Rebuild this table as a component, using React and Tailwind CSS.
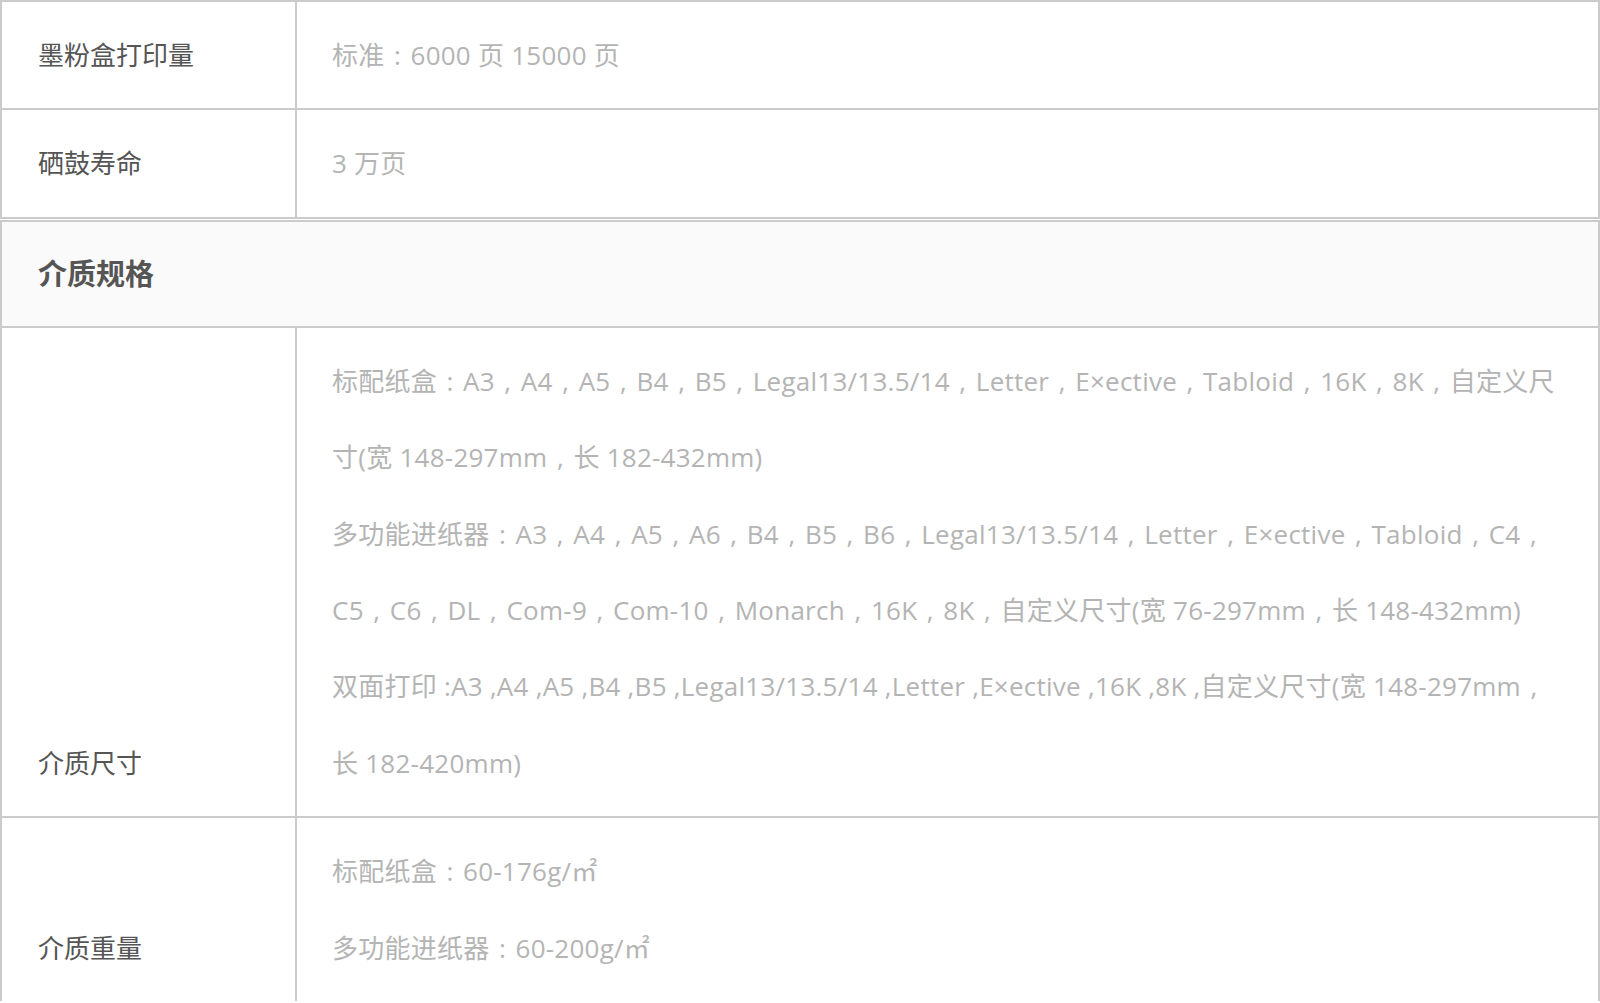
import React from "react";

const font = {
  fontFamily: '"Open Sans", "Noto Sans CJK SC", sans-serif',
};

// fullwidth comma / colon drawn centred in a 1em box, as in the source page
function T({ children }) {
  const parts = children.split(/([，：])/);
  return parts.map((p, i) =>
    p === "，" || p === "：" ? (
      <span key={i} className="inline-block w-[1em] text-center">
        {p === "，" ? "," : ":"}
      </span>
    ) : (
      p
    )
  );
}

function Row({ label, children, last }) {
  return (
    <div
      className={
        "grid grid-cols-[293px_1fr] " + (last ? "" : "border-b-2 border-[#cbcbcb]")
      }
    >
      <div className="flex items-end py-[15px] pl-[36px] text-[26px] leading-[76.4px] text-[#555]">
        {label}
      </div>
      <div className="border-l-2 border-[#cbcbcb] py-[15px] pl-[35px] pr-[10px] text-[26px] leading-[76.4px] tracking-[0.25px] whitespace-nowrap text-[#b4b4b4]">
        {children}
      </div>
    </div>
  );
}

export default function App() {
  return (
    <div className="w-[1600px] bg-white" style={font}>
      <div className="border-x-2 border-t-2 border-[#cbcbcb]">
        <Row label="墨粉盒打印量">
          <T>标准：6000 页 15000 页</T>
        </Row>
        <Row label="硒鼓寿命">3 万页</Row>
      </div>

      <div className="mt-[1px] border-x-2 border-t-2 border-[#cbcbcb]">
        <div className="border-b-2 border-[#cbcbcb] bg-[#fafafa] py-[14px] pl-[36px] text-[29px] font-bold leading-[76px] text-[#555]">
          介质规格
        </div>
        <Row label="介质尺寸">
          <p>
            <T>标配纸盒：A3，A4，A5，B4，B5，Legal13/13.5/14，Letter，E×ective，Tabloid，16K，8K，自定义尺</T>
            <br />
            <T>寸(宽 148-297mm，长 182-432mm)</T>
          </p>
          <p>
            <T>多功能进纸器：A3，A4，A5，A6，B4，B5，B6，Legal13/13.5/14，Letter，E×ective，Tabloid，C4，</T>
            <br />
            <T>C5，C6，DL，Com-9，Com-10，Monarch，16K，8K，自定义尺寸(宽 76-297mm，长 148-432mm)</T>
          </p>
          <p>
            <T>双面打印 :A3 ,A4 ,A5 ,B4 ,B5 ,Legal13/13.5/14 ,Letter ,E×ective ,16K ,8K ,自定义尺寸(宽 148-297mm，</T>
            <br />
            长 182-420mm)
          </p>
        </Row>
        <Row label="介质重量" last>
          <p>
            <T>标配纸盒：60-176g/㎡</T>
          </p>
          <p>
            <T>多功能进纸器：60-200g/㎡</T>
          </p>
        </Row>
      </div>
    </div>
  );
}
